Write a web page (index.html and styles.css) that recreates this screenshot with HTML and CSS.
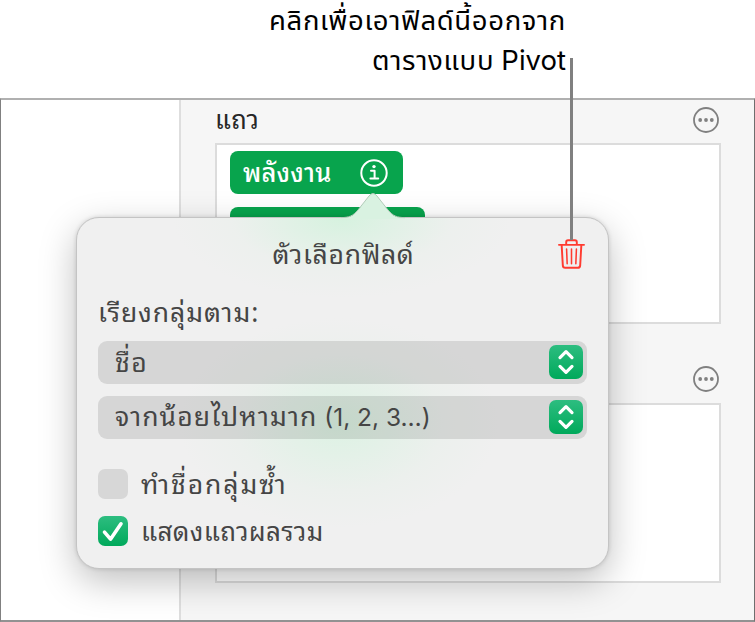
FILE: index.html
```
<!DOCTYPE html>
<html lang="th">
<head>
    <meta charset="UTF-8">
    <meta name="viewport" content="width=device-width, initial-scale=1.0">
    <title>ตัวเลือกฟิลด์</title>
    <link rel="stylesheet" href="styles.css">
</head>
<body>
    <header class="callout">
        <p><span class="callout-first">คลิกเพื่อเอาฟิลด์นี้ออกจาก</span></p>
        <p><span class="callout-second">ตารางแบบ</span> <span class="latin">Pivot</span></p>
    </header>

    <main class="window">
        <div class="canvas"></div>
        <div class="sidebar">
            <section class="group">
                <div class="group-header">
                    <h2>แถว</h2>
                    <svg class="more" viewBox="0 0 26 26">
                        <circle cx="13" cy="13" r="12"/>
                        <circle class="dot" cx="7.2" cy="13" r="1.9"/>
                        <circle class="dot" cx="13" cy="13" r="1.9"/>
                        <circle class="dot" cx="18.8" cy="13" r="1.9"/>
                    </svg>
                </div>
                <div class="fields">
                    <div class="field">
                        <span class="field-name">พลังงาน</span>
                        <svg class="info" viewBox="0 0 28 28">
                            <circle cx="14" cy="14" r="12.7"/>
                            <path d="M11 11.8h3.6v7.8M10.4 19.6h7.8"/>
                            <circle class="dot" cx="14" cy="7.6" r="1.7"/>
                        </svg>
                    </div>
                    <div class="field field-wide"></div>
                </div>
            </section>
            <section class="group">
                <div class="group-header">
                    <svg class="more" viewBox="0 0 26 26">
                        <circle cx="13" cy="13" r="12"/>
                        <circle class="dot" cx="7.2" cy="13" r="1.9"/>
                        <circle class="dot" cx="13" cy="13" r="1.9"/>
                        <circle class="dot" cx="18.8" cy="13" r="1.9"/>
                    </svg>
                </div>
                <div class="fields"></div>
            </section>
        </div>
    </main>

    <div class="popover">
        <svg class="arrow" viewBox="0 0 64 27">
            <path class="arrow-fill" d="M0 27V26C8 26 12 24 17 18L28 4Q32-1 36 4L47 18C52 24 56 26 64 26V27Z"/>
            <path class="arrow-edge" d="M0 25.6C8 25.6 12 24 17 18L28 4Q32-1 36 4L47 18C52 24 56 25.6 64 25.6"/>
        </svg>
        <div class="title-row">
            <h1>ตัวเลือกฟิลด์</h1>
            <svg class="trash" viewBox="0 0 28 32">
                <path d="M1 6.5h26M8.5 6V3.7Q8.5 1.8 10.4 1.8h7.2q1.9 0 1.9 1.9V6M3.8 6.8l1.2 21q.1 2.5 2.5 2.5h13q2.4 0 2.5-2.5l1.2-21"/>
                <path class="thin" d="M8.9 10.8l.6 15.2M14 10.8V26M19.1 10.8L18.5 26"/>
            </svg>
        </div>
        <p class="sort-label">เรียงกลุ่มตาม:</p>
        <div class="select">
            <span class="value-name">ชื่อ</span>
            <svg class="stepper" viewBox="0 0 34 34"><path d="M11 12.6l6-6 6 6M11 21.4l6 6 6-6"/></svg>
        </div>
        <div class="select">
            <span><span class="value-order">จากน้อยไปหามาก</span> <span class="latin">(1, 2, 3…)</span></span>
            <svg class="stepper" viewBox="0 0 34 34"><path d="M11 12.6l6-6 6 6M11 21.4l6 6 6-6"/></svg>
        </div>
        <div class="option option-first">
            <span class="checkbox"></span>
            <span class="repeat-label">ทำชื่อกลุ่มซ้ำ</span>
        </div>
        <div class="option">
            <span class="checkbox checked"><svg viewBox="0 0 30 30"><path d="M6.5 16.2l6 7L23 7.8"/></svg></span>
            <span class="total-label">แสดงแถวผลรวม</span>
        </div>
    </div>
    <div class="pointer"></div>
</body>
</html>
```
FILE: styles.css
```
* {
    box-sizing: border-box;
}

body {
    margin: 0;
    width: 755px;
    height: 622px;
    position: relative;
    overflow: hidden;
    background-color: #fff;
    color: #454545;
    font-family: "Noto Sans Thai Looped", "Noto Looped Thai", "Loma", "Umpush", "Garuda", "Waree", "Sarabun", "Liberation Sans", sans-serif;
    font-size: 26.5px;
}

.latin {
    font-family: Inter, sans-serif;
}

h1, h2, p {
    margin: 0;
    font-size: inherit;
    font-weight: 400;
    white-space: nowrap;
}

svg {
    display: block;
    flex: none;
    fill: none;
    stroke-linecap: round;
    stroke-linejoin: round;
}

.callout {
    height: 98px;
    padding: 3px 189px 0 0;
    text-align: right;
    color: #000;
    font-family: "Noto Sans Thai", sans-serif;
    font-size: 27.5px;
}

.callout p {
    height: 38px;
    line-height: 38px;
}

.callout-first {
    letter-spacing: 0.63px;
}

.callout-second {
    letter-spacing: 0.7px;
}

.window {
    height: 524px;
    display: flex;
    border: 1px solid #6e6e6e;
    border-top: 2px solid #b0b0b0;
    border-bottom: 2px solid #929292;
    border-left-color: #808080;
}

.canvas {
    width: 178px;
}

.sidebar {
    flex: 1;
    padding: 0 33px 0 34px;
    border-left: 2px solid #dedede;
    background-color: #f6f6f6;
}

.group-header {
    height: 43px;
    display: flex;
    align-items: center;
    justify-content: space-between;
    line-height: 40px;
    color: #262626;
}

.group-header h2 {
    margin-bottom: 7px;
    font-size: 25.5px;
    letter-spacing: 0.3px;
}

.group + .group .group-header {
    height: 79px;
    padding-top: 31px;
    justify-content: flex-end;
}

.more {
    width: 26px;
    height: 26px;
    margin-left: auto;
    margin-right: 2px;
    stroke: #808080;
    stroke-width: 1.8;
}

.group:first-child .more {
    margin-bottom: 3px;
}

.more .dot {
    fill: #808080;
    stroke: none;
}

.fields {
    height: 181px;
    padding: 6px 13px;
    border: 2px solid #dcdcdc;
    background-color: #fff;
    display: flex;
    flex-direction: column;
    gap: 13px;
}

.group + .group .fields {
    height: 180px;
}

.field {
    width: 173px;
    height: 43px;
    padding: 0 15px 0 13px;
    display: flex;
    align-items: center;
    justify-content: space-between;
    border-radius: 8px;
    background-color: #08a44d;
    color: #fff;
    line-height: 40px;
}

.field-wide {
    width: 195px;
}

.field-name {
    margin-bottom: 4px;
    font-size: 25.5px;
    font-weight: 500;
    letter-spacing: 0.25px;
}

.info {
    width: 28px;
    height: 28px;
    stroke: #fff;
    stroke-width: 2;
}

.info .dot {
    fill: #fff;
    stroke: none;
}

.popover {
    position: absolute;
    left: 76px;
    top: 217px;
    width: 533px;
    height: 352px;
    padding: 14px 21px 0;
    border: 1px solid #c4c4c4;
    border-radius: 23px;
    background:
        radial-gradient(ellipse 170px 80px at 265px 0, #d6f2df, rgba(232, 240, 234, 0.4) 65%, transparent),
        radial-gradient(ellipse 160px 105px at 262px 205px, #dcf2e3, rgba(232, 240, 234, 0.5) 65%, transparent),
        #f0f0f0;
    box-shadow: 0 12px 36px rgba(0, 0, 0, 0.25), 0 0 4px rgba(0, 0, 0, 0.14);
}

.arrow {
    position: absolute;
    left: 264px;
    top: -26px;
    width: 64px;
    height: 27px;
}

.arrow-fill {
    fill: #d9f2e1;
}

.arrow-edge {
    stroke: #b2ccb9;
    stroke-width: 1;
}

.title-row {
    height: 44px;
    display: flex;
    align-items: center;
    justify-content: center;
    position: relative;
}

.title-row h1 {
    margin-bottom: 5px;
    padding-left: 2px;
    letter-spacing: 0.7px;
}

.trash {
    width: 27px;
    height: 32px;
    position: absolute;
    right: 2px;
    top: 6px;
    stroke: #ff3b30;
    stroke-width: 2;
}

.trash .thin {
    stroke-width: 1.6;
}

.sort-label {
    height: 52px;
    margin-top: 13px;
    line-height: 42px;
    letter-spacing: 0.95px;
}

.select {
    height: 43px;
    margin-bottom: 12px;
    padding: 0 4px 0 17px;
    display: flex;
    align-items: center;
    justify-content: space-between;
    border-radius: 9px;
    background-color: rgba(0, 0, 0, 0.105);
    line-height: 40px;
    white-space: nowrap;
}

.select > span {
    margin-bottom: 5px;
}

.value-name {
    letter-spacing: 1.4px;
}

.value-order {
    letter-spacing: 1.05px;
}

.select .latin {
    font-size: 24.5px;
}

.stepper {
    width: 34px;
    height: 34px;
    margin-bottom: 1px;
    border-radius: 7px;
    background: linear-gradient(#2dbd80, #00a95b);
    stroke: #fff;
    stroke-width: 3.2;
}

.option {
    height: 30px;
    margin-bottom: 17px;
    display: flex;
    align-items: center;
    gap: 13px;
    white-space: nowrap;
}

.option-first {
    margin-top: 30px;
}

.repeat-label {
    margin-bottom: 4px;
    letter-spacing: 1.9px;
}

.total-label {
    margin-bottom: 4px;
    font-size: 26px;
    letter-spacing: 0.35px;
}

.checkbox {
    width: 30px;
    height: 30px;
    border-radius: 7px;
    background-color: #d7d7d7;
}

.checkbox.checked {
    background: linear-gradient(#2dbd80, #00a95b);
    stroke: #fff;
    stroke-width: 3.6;
}

.pointer {
    position: absolute;
    left: 570px;
    top: 58px;
    width: 3px;
    height: 182px;
    background-color: #808080;
}
```
